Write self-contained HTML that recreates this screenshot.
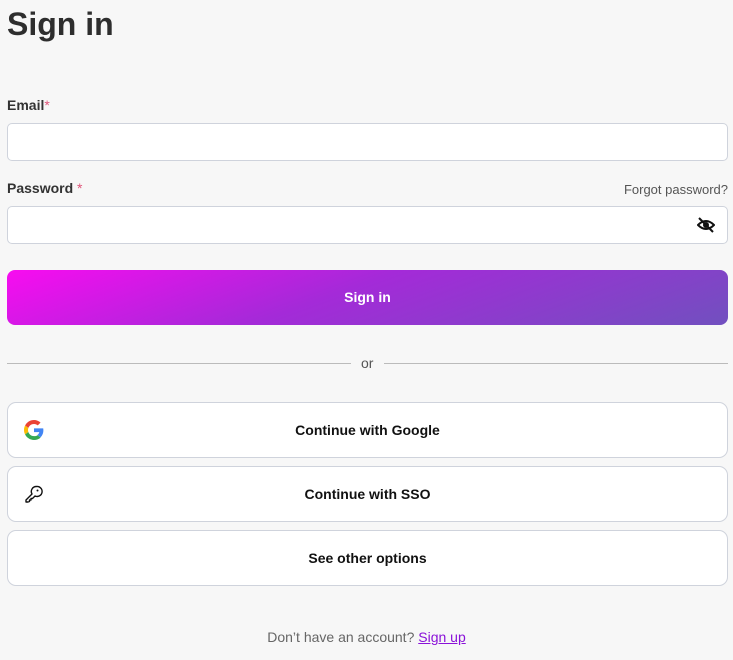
<!DOCTYPE html>
<html><head><style>
*{box-sizing:border-box;margin:0;padding:0}
body{width:733px;height:660px;background:#f7f7f7;font-family:"Liberation Sans",sans-serif;color:#333;position:relative;overflow:hidden}
.a{position:absolute}
h1{position:absolute;left:7px;top:6px;font-size:32px;font-weight:bold;color:#2e2e2e}
.lbl{font-size:14px;font-weight:bold;color:#333}
.lbl span{color:#e0557a;font-weight:normal}
.inp{position:absolute;left:7px;width:721px;height:38px;background:#fff;border:1px solid #cfd3dc;border-radius:5px}
.btn{position:absolute;left:7px;width:721px;height:56px;background:#fff;border:1px solid #cfd3dc;border-radius:9px;font-size:14px;font-weight:bold;color:#111;text-align:center;line-height:54px}
</style></head><body>
<h1>Sign in</h1>
<div class="a lbl" style="left:7px;top:97px">Email<span>*</span></div>
<div class="inp" style="top:123px"></div>
<div class="a lbl" style="left:7px;top:180px">Password<span> *</span></div>
<div class="a" style="right:5px;top:182px;font-size:13px;color:#555">Forgot password?</div>
<div class="inp" style="top:206px"></div>
<svg class="a" style="left:697px;top:217px" width="18" height="16" viewBox="0 0 18 16"><path d="M1 8 Q9 0 17 8 Q9 16 1 8Z" fill="none" stroke="#111" stroke-width="2"/><circle cx="9" cy="8" r="3" fill="#111"/><line x1="2" y1="1" x2="16" y2="15" stroke="#111" stroke-width="2"/></svg>
<div class="a" style="left:7px;top:270px;width:721px;height:55px;border-radius:8px;background:linear-gradient(160deg,#f80cf0 0%,#a42ad8 45%,#7150bf 100%);color:#fff;font-size:14px;font-weight:bold;text-align:center;line-height:55px">Sign in</div>
<div class="a" style="left:7px;top:363px;width:344px;height:1px;background:#bbb"></div>
<div class="a" style="left:384px;top:363px;width:344px;height:1px;background:#bbb"></div>
<div class="a" style="left:361px;top:355px;font-size:14px;color:#555">or</div>
<div class="btn" style="top:402px">Continue with Google</div>
<svg class="a" style="left:24px;top:420px" width="20" height="20" viewBox="0 0 48 48"><path fill="#EA4335" d="M24 9.5c3.5 0 6.6 1.2 9 3.5l6.7-6.7C35.6 2.4 30.2 0 24 0 14.6 0 6.6 5.4 2.6 13.3l7.8 6C12.3 13.6 17.7 9.5 24 9.5z"/><path fill="#4285F4" d="M46.5 24.5c0-1.6-.1-3.1-.4-4.5H24v9h12.7c-.6 2.9-2.2 5.4-4.7 7.1l7.3 5.7c4.3-4 7.2-9.9 7.2-17.3z"/><path fill="#FBBC05" d="M10.4 28.7c-.5-1.5-.8-3-.8-4.7s.3-3.2.8-4.7l-7.8-6C1 16.5 0 20.1 0 24s1 7.5 2.6 10.7l7.8-6z"/><path fill="#34A853" d="M24 48c6.5 0 11.9-2.1 15.9-5.8l-7.3-5.7c-2 1.4-4.7 2.3-8.6 2.3-6.3 0-11.7-4.2-13.6-9.9l-7.8 6C6.6 42.6 14.6 48 24 48z"/></svg>
<div class="btn" style="top:466px">Continue with SSO</div>
<svg class="a" style="left:24px;top:484px" width="20" height="20" viewBox="0 0 20 20" fill="none" stroke="#111" stroke-width="1.4" stroke-linejoin="round"><path d="M12.5 2.5a5 5 0 1 1 -1.5 9.5L8.5 14.5H7v1.5H5.5v1.5L4 18H2v-2l6-6a5 5 0 0 1 4.5 -7.5z"/><circle cx="13.5" cy="6.5" r="1" fill="#111" stroke="none"/></svg>
<div class="btn" style="top:530px">See other options</div>
<div class="a" style="left:0;width:733px;top:629px;text-align:center;font-size:14px;color:#666">Don’t have an account? <u style="color:#8a12d8">Sign up</u></div>
</body></html>
